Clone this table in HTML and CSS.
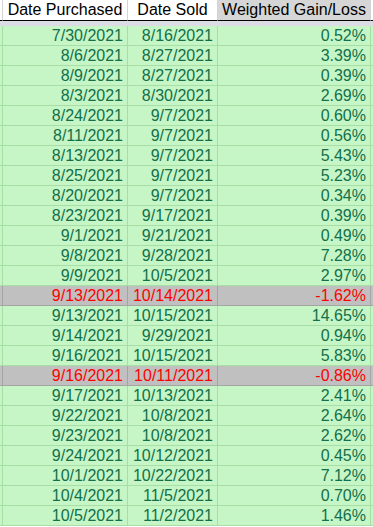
FILE: index.html
```html
<!DOCTYPE html>
<html>
<head>
<meta charset="utf-8">
<link rel="stylesheet" href="styles.css">
</head>
<body>
<div class="sheet">
  <div class="row head">
    <div class="cell edge"></div>
    <div class="cell">Date Purchased</div>
    <div class="cell">Date Sold</div>
    <div class="cell sel">Weighted Gain/Loss</div>
    <div class="cell tail"></div>
  </div>
  <div class="strip"></div>
  <div class="row good"><div class="cell edge"></div><div class="cell">7/30/2021</div><div class="cell">8/16/2021</div><div class="cell">0.52%</div><div class="cell tail"></div></div>
  <div class="row good"><div class="cell edge"></div><div class="cell">8/6/2021</div><div class="cell">8/27/2021</div><div class="cell">3.39%</div><div class="cell tail"></div></div>
  <div class="row good"><div class="cell edge"></div><div class="cell">8/9/2021</div><div class="cell">8/27/2021</div><div class="cell">0.39%</div><div class="cell tail"></div></div>
  <div class="row good"><div class="cell edge"></div><div class="cell">8/3/2021</div><div class="cell">8/30/2021</div><div class="cell">2.69%</div><div class="cell tail"></div></div>
  <div class="row good"><div class="cell edge"></div><div class="cell">8/24/2021</div><div class="cell">9/7/2021</div><div class="cell">0.60%</div><div class="cell tail"></div></div>
  <div class="row good"><div class="cell edge"></div><div class="cell">8/11/2021</div><div class="cell">9/7/2021</div><div class="cell">0.56%</div><div class="cell tail"></div></div>
  <div class="row good"><div class="cell edge"></div><div class="cell">8/13/2021</div><div class="cell">9/7/2021</div><div class="cell">5.43%</div><div class="cell tail"></div></div>
  <div class="row good"><div class="cell edge"></div><div class="cell">8/25/2021</div><div class="cell">9/7/2021</div><div class="cell">5.23%</div><div class="cell tail"></div></div>
  <div class="row good"><div class="cell edge"></div><div class="cell">8/20/2021</div><div class="cell">9/7/2021</div><div class="cell">0.34%</div><div class="cell tail"></div></div>
  <div class="row good"><div class="cell edge"></div><div class="cell">8/23/2021</div><div class="cell">9/17/2021</div><div class="cell">0.39%</div><div class="cell tail"></div></div>
  <div class="row good"><div class="cell edge"></div><div class="cell">9/1/2021</div><div class="cell">9/21/2021</div><div class="cell">0.49%</div><div class="cell tail"></div></div>
  <div class="row good"><div class="cell edge"></div><div class="cell">9/8/2021</div><div class="cell">9/28/2021</div><div class="cell">7.28%</div><div class="cell tail"></div></div>
  <div class="row good"><div class="cell edge"></div><div class="cell">9/9/2021</div><div class="cell">10/5/2021</div><div class="cell">2.97%</div><div class="cell tail"></div></div>
  <div class="row bad"><div class="cell edge"></div><div class="cell">9/13/2021</div><div class="cell">10/14/2021</div><div class="cell">-1.62%</div><div class="cell tail"></div></div>
  <div class="row good"><div class="cell edge"></div><div class="cell">9/13/2021</div><div class="cell">10/15/2021</div><div class="cell">14.65%</div><div class="cell tail"></div></div>
  <div class="row good"><div class="cell edge"></div><div class="cell">9/14/2021</div><div class="cell">9/29/2021</div><div class="cell">0.94%</div><div class="cell tail"></div></div>
  <div class="row good"><div class="cell edge"></div><div class="cell">9/16/2021</div><div class="cell">10/15/2021</div><div class="cell">5.83%</div><div class="cell tail"></div></div>
  <div class="row bad"><div class="cell edge"></div><div class="cell">9/16/2021</div><div class="cell">10/11/2021</div><div class="cell">-0.86%</div><div class="cell tail"></div></div>
  <div class="row good"><div class="cell edge"></div><div class="cell">9/17/2021</div><div class="cell">10/13/2021</div><div class="cell">2.41%</div><div class="cell tail"></div></div>
  <div class="row good"><div class="cell edge"></div><div class="cell">9/22/2021</div><div class="cell">10/8/2021</div><div class="cell">2.64%</div><div class="cell tail"></div></div>
  <div class="row good"><div class="cell edge"></div><div class="cell">9/23/2021</div><div class="cell">10/8/2021</div><div class="cell">2.62%</div><div class="cell tail"></div></div>
  <div class="row good"><div class="cell edge"></div><div class="cell">9/24/2021</div><div class="cell">10/12/2021</div><div class="cell">0.45%</div><div class="cell tail"></div></div>
  <div class="row good"><div class="cell edge"></div><div class="cell">10/1/2021</div><div class="cell">10/22/2021</div><div class="cell">7.12%</div><div class="cell tail"></div></div>
  <div class="row good"><div class="cell edge"></div><div class="cell">10/4/2021</div><div class="cell">11/5/2021</div><div class="cell">0.70%</div><div class="cell tail"></div></div>
  <div class="row good"><div class="cell edge"></div><div class="cell">10/5/2021</div><div class="cell">11/2/2021</div><div class="cell">1.46%</div><div class="cell tail"></div></div>
</div>
</body>
</html>
```
FILE: styles.css
```css
* { box-sizing: border-box; }
html, body { margin: 0; padding: 0; background: #ffffff; }
body {
  font-family: "Liberation Sans", Arial, sans-serif;
  font-size: 16px;
}
.sheet { width: 373px; }
.row {
  display: grid;
  grid-template-columns: 3px 125px 90px 153px 2px;
  height: 20px;
}
.cell {
  border-right: 1px solid #d4d4d4;
  border-bottom: 1px solid #d4d4d4;
  line-height: 19px;
  white-space: nowrap;
  overflow: hidden;
}
.cell.tail { border-right: none; }
.head { height: 21px; }
.head .cell {
  background: #ffffff;
  color: #000000;
  text-align: center;
  line-height: 20px;
  border-bottom: 1px solid #000000;
}
.head .cell.sel { background: #d6d6d6; }
.strip { height: 5px; background: #dcdce4; }
.good .cell {
  background: #c6f6c6;
  color: #12704a;
  border-color: #a6dea6;
  text-align: right;
  padding-right: 4px;
}
.bad .cell {
  background: #c0c0c0;
  color: #ff0000;
  border-color: #a4a4a4;
  text-align: right;
  padding-right: 4px;
}
.good .cell.edge, .bad .cell.edge, .good .cell.tail, .bad .cell.tail { padding: 0; }
```
